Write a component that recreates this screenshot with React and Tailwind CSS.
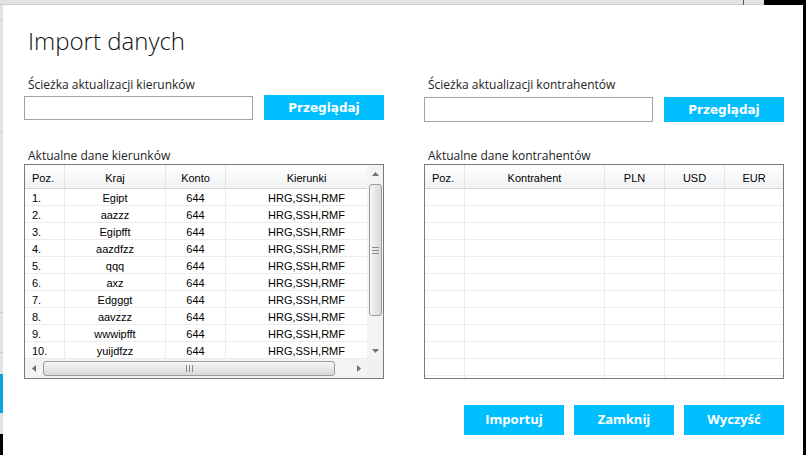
import React from 'react';

const kierunki = [
  ['1.', 'Egipt'],
  ['2.', 'aazzz'],
  ['3.', 'Egipfft'],
  ['4.', 'aazdfzz'],
  ['5.', 'qqq'],
  ['6.', 'axz'],
  ['7.', 'Edgggt'],
  ['8.', 'aavzzz'],
  ['9.', 'wwwipfft'],
  ['10.', 'yuijdfzz'],
];

const gridFont = { fontFamily: '"Liberation Sans", Arial, sans-serif' };

const Tri = ({ dir }) => {
  const pts = {
    up: '0,4 3.5,0 7,4',
    down: '0,0 3.5,4 7,0',
    left: '4,0 0,3.5 4,7',
    right: '0,0 4,3.5 0,7',
  };
  const vertical = dir === 'up' || dir === 'down';
  return (
    <svg width={vertical ? 7 : 4} height={vertical ? 4 : 7} viewBox={vertical ? '0 0 7 4' : '0 0 4 7'}>
      <polygon points={pts[dir]} fill="#707070" />
    </svg>
  );
};

const VScroll = () => (
  <div className="w-[16px] flex flex-col bg-[#f3f3f3]">
    <div className="h-[17px] flex items-center justify-center">
      <Tri dir="up" />
    </div>
    <div className="flex-1 pt-[2px]">
      <div className="mx-auto w-[13px] h-[132px] rounded-[3px] border border-[#9c9c9c] bg-gradient-to-r from-[#f6f6f6] to-[#d9d9d9] flex flex-col items-center justify-center gap-[2px]">
        <div className="w-[7px] h-px bg-[#8a8a8a]" />
        <div className="w-[7px] h-px bg-[#8a8a8a]" />
        <div className="w-[7px] h-px bg-[#8a8a8a]" />
      </div>
    </div>
    <div className="h-[17px] flex items-center justify-center">
      <Tri dir="down" />
    </div>
  </div>
);

const HScroll = () => (
  <div className="h-[19px] flex bg-[#f3f3f3]">
    <div className="flex-1 flex">
      <div className="w-[17px] flex items-center justify-center">
        <Tri dir="left" />
      </div>
      <div className="flex-1 flex items-center pl-px">
        <div className="w-[292px] h-[15px] rounded-[3px] border border-[#9c9c9c] bg-gradient-to-b from-[#f6f6f6] to-[#d9d9d9] flex items-center justify-center gap-[2px]">
          <div className="w-px h-[7px] bg-[#8a8a8a]" />
          <div className="w-px h-[7px] bg-[#8a8a8a]" />
          <div className="w-px h-[7px] bg-[#8a8a8a]" />
        </div>
      </div>
      <div className="w-[17px] flex items-center justify-center">
        <Tri dir="right" />
      </div>
    </div>
    <div className="w-[16px] bg-[#f0f0f0]" />
  </div>
);

const HeaderCell = ({ w, left, last, shift, children }) => (
  <div
    className={`h-full shrink-0 leading-[26px] overflow-hidden whitespace-nowrap ${
      left ? 'text-left' : 'text-center'
    } ${shift ? 'pl-[20px]' : 'px-[7px]'} ${last ? 'flex-1' : 'border-r border-[#e3e5e8]'}`}
    style={w ? { width: w } : undefined}
  >
    {children}
  </div>
);

const Cell = ({ w, left, last, shift, children }) => (
  <div
    className={`h-full shrink-0 leading-[19px] overflow-hidden whitespace-nowrap ${
      left ? 'text-left' : 'text-center'
    } ${shift ? 'pl-[20px]' : 'px-[7px]'} ${last ? 'flex-1' : 'border-r border-[#ececec]'}`}
    style={w ? { width: w } : undefined}
  >
    {children}
  </div>
);

const Header = ({ cols, shiftLast }) => (
  <div className="h-[24px] flex border-b border-[#d5d5d5] bg-gradient-to-b from-white to-[#f1f2f4] text-black">
    {cols.map((c, i) => (
      <HeaderCell
        key={c.label}
        w={c.w}
        left={i === 0}
        last={i === cols.length - 1}
        shift={shiftLast && i === cols.length - 1}
      >
        {c.label}
      </HeaderCell>
    ))}
  </div>
);

const KierunkiTable = () => {
  const cols = [
    { label: 'Poz.', w: 40 },
    { label: 'Kraj', w: 101 },
    { label: 'Konto', w: 60 },
    { label: 'Kierunki' },
  ];
  return (
    <div className="w-[360px] h-[215px] border border-[#7a7a7a] bg-white flex flex-col text-[11px]" style={gridFont}>
      <div className="h-[194px] flex">
        <div className="flex-1 flex flex-col overflow-hidden">
          <Header cols={cols} shiftLast />
          {kierunki.map(([poz, kraj]) => (
            <div key={poz} className="h-[17px] flex border-b border-[#ececec] text-black">
              <Cell w={40} left>{poz}</Cell>
              <Cell w={101}>{kraj}</Cell>
              <Cell w={60}>644</Cell>
              <Cell last shift>HRG,SSH,RMF</Cell>
            </div>
          ))}
        </div>
        <VScroll />
      </div>
      <HScroll />
    </div>
  );
};

const KontrahenciTable = () => {
  const cols = [
    { label: 'Poz.', w: 40 },
    { label: 'Kontrahent', w: 140 },
    { label: 'PLN', w: 60 },
    { label: 'USD', w: 60 },
    { label: 'EUR' },
  ];
  const rows = Array.from({ length: 12 }, (_, i) => i);
  return (
    <div className="w-[360px] h-[215px] border border-[#7a7a7a] bg-white flex flex-col overflow-hidden text-[11px]" style={gridFont}>
      <Header cols={cols} />
      {rows.map((r) => (
        <div key={r} className="h-[17px] shrink-0 flex border-b border-[#ececec]">
          <Cell w={40} />
          <Cell w={140} />
          <Cell w={60} />
          <Cell w={60} />
          <Cell last />
        </div>
      ))}
    </div>
  );
};

const BlueButton = ({ children, className = '' }) => (
  <button className={`bg-[#00bfff] text-white font-bold ${className}`}>{children}</button>
);

const PathField = ({ label, rowClass, inputClass }) => (
  <div>
    <div className="h-[16px] leading-[16px] pl-[4px] text-[12px] text-[#222]">{label}</div>
    <div className={`flex items-end ${rowClass}`}>
      <div className={`w-[229px] border border-[#a3a3a3] bg-white ${inputClass}`} />
      <button
        className="ml-[11px] w-[120px] h-[25px] bg-[#00bfff] text-white font-bold text-[12px]"
        style={{ fontFamily: '"DejaVu Sans", Verdana, sans-serif' }}
      >
        Przeglądaj
      </button>
    </div>
  </div>
);

export default function App() {
  return (
    <div className="w-[806px] h-[455px] overflow-hidden flex flex-col bg-black" style={{ fontFamily: '"Open Sans", "Noto Sans", sans-serif' }}>
      {/* tło za oknem */}
      <div className="h-[5px] flex shrink-0">
        <div className="w-[743px] bg-[#e3e3e3] border-b border-[#cdcdcd]" />
        <div className="w-px bg-[#555]" />
        <div className="w-[20px] bg-[#e3e3e3] border-b border-[#cdcdcd]" />
        <div className="flex-1 bg-black" />
      </div>
      <div className="flex flex-1">
        <div className="w-[3px] flex flex-col">
          <div className="h-[369px] bg-[#e3e3e3] flex flex-col">
            <div className="h-[15px]" />
            <div className="h-px bg-[#c9c9c9]" />
            <div className="h-[110px]" />
            <div className="h-px bg-[#c9c9c9]" />
            <div className="h-[180px]" />
            <div className="h-px bg-[#c9c9c9]" />
            <div className="h-[39px]" />
            <div className="h-px bg-[#c9c9c9]" />
          </div>
          <div className="h-[39px] bg-[#0aa3de]" />
          <div className="h-[21px] bg-[#e3e3e3]" />
          <div className="flex-1 bg-black" />
        </div>

        {/* okno dialogowe */}
        <div className="w-[800px] bg-white pl-[21px] pr-[19px] pt-[22px]">
          <div className="h-[28px] leading-[28px] ml-[4px] text-[24px] font-light text-[#111]">Import danych</div>

          <div className="mt-[22px] grid grid-cols-[360px_360px] gap-x-[40px] items-start">
            <PathField label="Ścieżka aktualizacji kierunków" rowClass="mt-[2px] h-[25px]" inputClass="h-[24px]" />
            <PathField label="Ścieżka aktualizacji kontrahentów" rowClass="mt-[4px] h-[25px]" inputClass="h-[25px]" />
          </div>

          <div className="mt-[26px] grid grid-cols-[360px_360px] gap-x-[40px]">
            <div>
              <div className="h-[16px] leading-[16px] pl-[4px] text-[12px] text-[#222]">Aktualne dane kierunków</div>
              <KierunkiTable />
            </div>
            <div>
              <div className="h-[16px] leading-[16px] pl-[4px] text-[12px] text-[#222]">Aktualne dane kontrahentów</div>
              <KontrahenciTable />
            </div>
          </div>

          <div className="mt-[26px] flex justify-end gap-[10px]">
            <BlueButton className="w-[100px] h-[30px] text-[13px]">Importuj</BlueButton>
            <BlueButton className="w-[100px] h-[30px] text-[13px]">Zamknij</BlueButton>
            <BlueButton className="w-[100px] h-[30px] text-[13px]">Wyczyść</BlueButton>
          </div>
        </div>

        <div className="flex-1 bg-black" />
      </div>
    </div>
  );
}
